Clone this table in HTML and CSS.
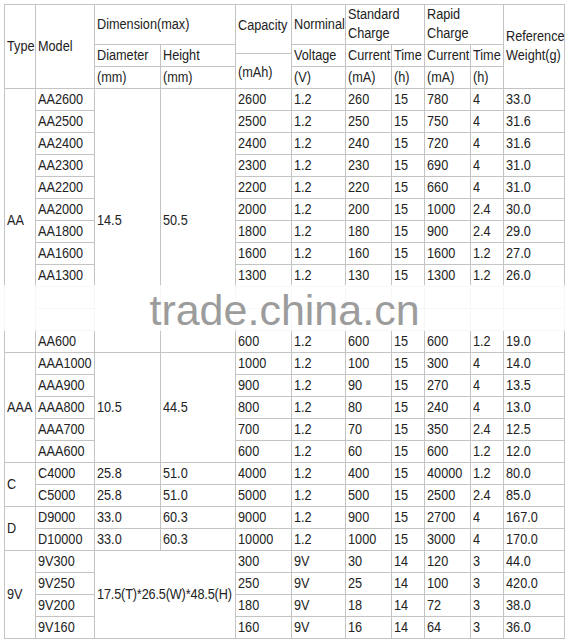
FILE: index.html
```html
<!DOCTYPE html>
<html>
<head>
<meta charset="utf-8">
<link rel="stylesheet" href="styles.css">
</head>
<body>
<div class="sheet">
<table class="spec">
<colgroup>
<col class="c-type"><col class="c-model"><col class="c-dia"><col class="c-hgt"><col class="c-cap"><col class="c-volt"><col class="c-cur"><col class="c-time"><col class="c-rcur"><col class="c-rtime"><col class="c-wt">
</colgroup>
<thead>
<tr class="h1">
<td rowspan="3"><span>Type</span></td>
<td rowspan="3"><span>Model</span></td>
<td colspan="2"><span>Dimension(max)</span></td>
<td rowspan="3" class="cap"><div class="cap-head"><span>Capacity</span></div><div class="cap-unit"><span>(mAh)</span></div></td>
<td><span>Norminal</span></td>
<td colspan="2"><span>Standard<br>Charge</span></td>
<td colspan="2"><span>Rapid<br>Charge</span></td>
<td rowspan="3"><span>Reference<br>Weight(g)</span></td>
</tr>
<tr>
<td><span>Diameter</span></td><td><span>Height</span></td><td><span>Voltage</span></td><td><span>Current</span></td><td><span>Time</span></td><td><span>Current</span></td><td><span>Time</span></td>
</tr>
<tr>
<td><span>(mm)</span></td><td><span>(mm)</span></td><td><span>(V)</span></td><td><span>(mA)</span></td><td><span>(h)</span></td><td><span>(mA)</span></td><td><span>(h)</span></td>
</tr>
</thead>
<tbody>
<tr><td rowspan="12"><span>AA</span></td><td><span>AA2600</span></td><td rowspan="12"><span>14.5</span></td><td rowspan="12"><span>50.5</span></td><td><span>2600</span></td><td><span>1.2</span></td><td><span>260</span></td><td><span>15</span></td><td><span>780</span></td><td><span>4</span></td><td><span>33.0</span></td></tr>
<tr><td><span>AA2500</span></td><td><span>2500</span></td><td><span>1.2</span></td><td><span>250</span></td><td><span>15</span></td><td><span>750</span></td><td><span>4</span></td><td><span>31.6</span></td></tr>
<tr><td><span>AA2400</span></td><td><span>2400</span></td><td><span>1.2</span></td><td><span>240</span></td><td><span>15</span></td><td><span>720</span></td><td><span>4</span></td><td><span>31.6</span></td></tr>
<tr><td><span>AA2300</span></td><td><span>2300</span></td><td><span>1.2</span></td><td><span>230</span></td><td><span>15</span></td><td><span>690</span></td><td><span>4</span></td><td><span>31.0</span></td></tr>
<tr><td><span>AA2200</span></td><td><span>2200</span></td><td><span>1.2</span></td><td><span>220</span></td><td><span>15</span></td><td><span>660</span></td><td><span>4</span></td><td><span>31.0</span></td></tr>
<tr><td><span>AA2000</span></td><td><span>2000</span></td><td><span>1.2</span></td><td><span>200</span></td><td><span>15</span></td><td><span>1000</span></td><td><span>2.4</span></td><td><span>30.0</span></td></tr>
<tr><td><span>AA1800</span></td><td><span>1800</span></td><td><span>1.2</span></td><td><span>180</span></td><td><span>15</span></td><td><span>900</span></td><td><span>2.4</span></td><td><span>29.0</span></td></tr>
<tr><td><span>AA1600</span></td><td><span>1600</span></td><td><span>1.2</span></td><td><span>160</span></td><td><span>15</span></td><td><span>1600</span></td><td><span>1.2</span></td><td><span>27.0</span></td></tr>
<tr><td><span>AA1300</span></td><td><span>1300</span></td><td><span>1.2</span></td><td><span>130</span></td><td><span>15</span></td><td><span>1300</span></td><td><span>1.2</span></td><td><span>26.0</span></td></tr>
<tr><td></td><td></td><td></td><td></td><td></td><td></td><td></td><td></td></tr>
<tr><td></td><td></td><td></td><td></td><td></td><td></td><td></td><td></td></tr>
<tr><td><span>AA600</span></td><td><span>600</span></td><td><span>1.2</span></td><td><span>600</span></td><td><span>15</span></td><td><span>600</span></td><td><span>1.2</span></td><td><span>19.0</span></td></tr>
<tr><td rowspan="5"><span>AAA</span></td><td><span>AAA1000</span></td><td rowspan="5"><span>10.5</span></td><td rowspan="5"><span>44.5</span></td><td><span>1000</span></td><td><span>1.2</span></td><td><span>100</span></td><td><span>15</span></td><td><span>300</span></td><td><span>4</span></td><td><span>14.0</span></td></tr>
<tr><td><span>AAA900</span></td><td><span>900</span></td><td><span>1.2</span></td><td><span>90</span></td><td><span>15</span></td><td><span>270</span></td><td><span>4</span></td><td><span>13.5</span></td></tr>
<tr><td><span>AAA800</span></td><td><span>800</span></td><td><span>1.2</span></td><td><span>80</span></td><td><span>15</span></td><td><span>240</span></td><td><span>4</span></td><td><span>13.0</span></td></tr>
<tr><td><span>AAA700</span></td><td><span>700</span></td><td><span>1.2</span></td><td><span>70</span></td><td><span>15</span></td><td><span>350</span></td><td><span>2.4</span></td><td><span>12.5</span></td></tr>
<tr><td><span>AAA600</span></td><td><span>600</span></td><td><span>1.2</span></td><td><span>60</span></td><td><span>15</span></td><td><span>600</span></td><td><span>1.2</span></td><td><span>12.0</span></td></tr>
<tr><td rowspan="2"><span>C</span></td><td><span>C4000</span></td><td><span>25.8</span></td><td><span>51.0</span></td><td><span>4000</span></td><td><span>1.2</span></td><td><span>400</span></td><td><span>15</span></td><td><span>40000</span></td><td><span>1.2</span></td><td><span>80.0</span></td></tr>
<tr><td><span>C5000</span></td><td><span>25.8</span></td><td><span>51.0</span></td><td><span>5000</span></td><td><span>1.2</span></td><td><span>500</span></td><td><span>15</span></td><td><span>2500</span></td><td><span>2.4</span></td><td><span>85.0</span></td></tr>
<tr><td rowspan="2"><span>D</span></td><td><span>D9000</span></td><td><span>33.0</span></td><td><span>60.3</span></td><td><span>9000</span></td><td><span>1.2</span></td><td><span>900</span></td><td><span>15</span></td><td><span>2700</span></td><td><span>4</span></td><td><span>167.0</span></td></tr>
<tr><td><span>D10000</span></td><td><span>33.0</span></td><td><span>60.3</span></td><td><span>10000</span></td><td><span>1.2</span></td><td><span>1000</span></td><td><span>15</span></td><td><span>3000</span></td><td><span>4</span></td><td><span>170.0</span></td></tr>
<tr><td rowspan="4"><span>9V</span></td><td><span>9V300</span></td><td rowspan="4" colspan="2" class="dims"><span>17.5(T)*26.5(W)*48.5(H)</span></td><td><span>300</span></td><td><span>9V</span></td><td><span>30</span></td><td><span>14</span></td><td><span>120</span></td><td><span>3</span></td><td><span>44.0</span></td></tr>
<tr><td><span>9V250</span></td><td><span>250</span></td><td><span>9V</span></td><td><span>25</span></td><td><span>14</span></td><td><span>100</span></td><td><span>3</span></td><td><span>420.0</span></td></tr>
<tr><td><span>9V200</span></td><td><span>180</span></td><td><span>9V</span></td><td><span>18</span></td><td><span>14</span></td><td><span>72</span></td><td><span>3</span></td><td><span>38.0</span></td></tr>
<tr><td><span>9V160</span></td><td><span>160</span></td><td><span>9V</span></td><td><span>16</span></td><td><span>14</span></td><td><span>64</span></td><td><span>3</span></td><td><span>36.0</span></td></tr>
</tbody>
</table>
<div class="watermark"><span class="wm-text">trade.china.cn</span></div>
</div>
</body>
</html>
```
FILE: styles.css
```css
html, body {
  margin: 0;
  padding: 0;
  background: #ffffff;
}
.sheet {
  position: relative;
  padding: 4px 0 0 4px;
  width: 569px;
  height: 644px;
  box-sizing: border-box;
}
.spec {
  border-collapse: collapse;
  table-layout: fixed;
  width: 560px;
  font-family: "Liberation Sans", Arial, sans-serif;
  font-size: 12.7px;
  color: #222222;
}
.c-type { width: 31px; }
.c-model { width: 59px; }
.c-dia { width: 66px; }
.c-hgt { width: 75px; }
.c-cap { width: 56px; }
.c-volt { width: 54px; }
.c-cur { width: 46px; }
.c-time { width: 33px; }
.c-rcur { width: 46px; }
.c-rtime { width: 33px; }
.c-wt { width: 61px; }
.spec td {
  border: 1px solid #c4c4c4;
  padding: 0 0 0 2px;
  height: 21px;
  line-height: 19px;
  vertical-align: middle;
  white-space: nowrap;
  overflow: visible;
}
.spec td > span,
.spec td > div > span {
  display: inline-block;
  line-height: 16px;
  transform: scaleY(1.2);
  transform-origin: 50% 50%;
}
.spec tr.h1 td {
  height: 39px;
}
.spec td.cap {
  padding: 0;
  vertical-align: top;
}
.cap-head {
  height: 48px;
  padding: 11px 0 0 2px;
  box-sizing: border-box;
}
.cap-unit {
  border-top: 1px solid #c4c4c4;
  padding: 9px 0 0 2px;
}
.spec td.dims {
  letter-spacing: -0.15px;
}
.watermark {
  position: absolute;
  left: 0;
  right: 0;
  top: 285px;
  height: 46px;
  padding-top: 4px;
  box-sizing: border-box;
  background: rgba(255, 255, 255, 0.86);
  display: flex;
  justify-content: center;
  align-items: flex-start;
}
.wm-text {
  font-family: "Liberation Sans", Arial, sans-serif;
  font-size: 43px;
  line-height: 42px;
  color: #9c9c9c;
}
```
